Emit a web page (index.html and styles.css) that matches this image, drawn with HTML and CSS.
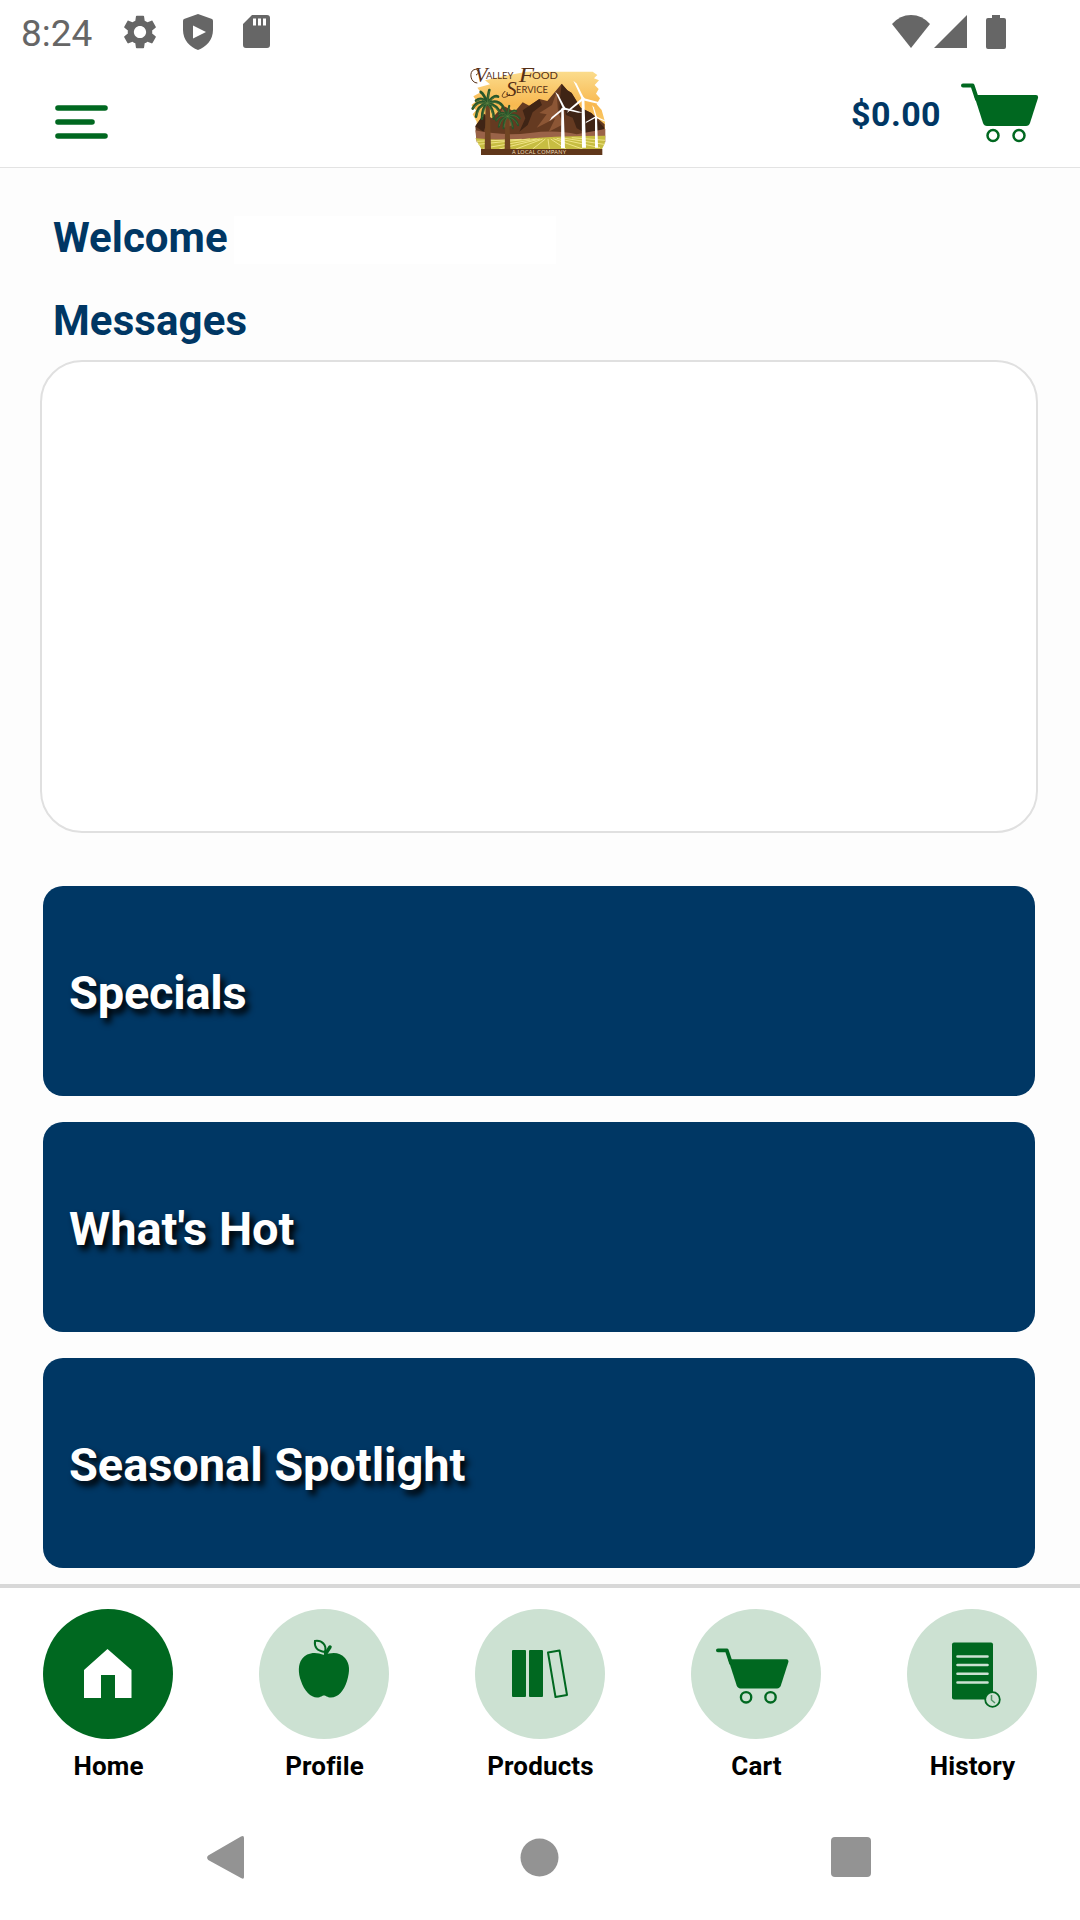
FILE: index.html
```html
<!DOCTYPE html>
<html lang="en">
<head>
<meta charset="utf-8">
<title>Valley Food Service</title>
<link rel="stylesheet" href="styles.css">
</head>
<body>
<div class="screen">
  <div class="status">
    <span class="clock">8:24</span>
    <svg class="gear" width="34" height="34" viewBox="2 2 20 20"><path d="M19.14 12.94c.04-.3.06-.61.06-.94 0-.32-.02-.64-.07-.94l2.03-1.58c.18-.14.23-.41.12-.61l-1.92-3.32c-.12-.22-.37-.29-.59-.22l-2.39.96c-.5-.38-1.03-.7-1.62-.94l-.36-2.54c-.04-.24-.24-.41-.48-.41h-3.84c-.24 0-.43.17-.47.41l-.36 2.54c-.59.24-1.13.57-1.62.94l-2.39-.96c-.22-.08-.47 0-.59.22L2.74 8.87c-.12.21-.08.47.12.61l2.03 1.58c-.05.3-.09.63-.09.94s.02.64.07.94l-2.03 1.58c-.18.14-.23.41-.12.61l1.92 3.32c.12.22.37.29.59.22l2.39-.96c.5.38 1.03.7 1.62.94l.36 2.54c.05.24.24.41.48.41h3.84c.24 0 .44-.17.47-.41l.36-2.54c.59-.24 1.13-.56 1.62-.94l2.39.96c.22.08.47 0 .59-.22l1.92-3.32c.12-.22.07-.47-.12-.61l-2.01-1.58zM12 15.6c-1.98 0-3.6-1.62-3.6-3.6s1.62-3.6 3.6-3.6 3.6 1.62 3.6 3.6-1.62 3.6-3.6 3.6z"/></svg>
    <svg class="shield" width="30" height="36" viewBox="0 0 30 36"><path fill-rule="evenodd" d="M15 0 29 5Q30 5.500 30 7V16C30 26 23 33 15 36 7 33 0 26 0 16V7Q0 5.500 1 5ZM10 11.500V24.500L23 18Z"/></svg>
    <svg class="sdcard" width="27" height="33" viewBox="0 0 27 33"><path fill-rule="evenodd" d="M9 0H24Q27 0 27 3V30Q27 33 24 33H3Q0 33 0 30V9ZM10 3.500V10.500H13V3.500ZM15 3.500V10.500H18V3.500ZM20 3.500V10.500H23V3.500Z"/></svg>
    <div class="signals">
      <svg width="38" height="33" viewBox="0 0 38 33"><path d="M0 9Q8 0 19 0T38 9L19 33Z"/></svg>
      <svg class="cell" width="33" height="33" viewBox="0 0 33 33"><path d="M33 0V33H0Z"/></svg>
      <svg class="battery" width="20" height="34" viewBox="0 0 20 34"><path d="M6 0H14V3H18Q20 3 20 5V32Q20 34 18 34H2Q0 34 0 32V5Q0 3 2 3H6Z"/></svg>
    </div>
  </div>

  <header class="header">
    <svg class="menu" width="53" height="34" viewBox="0 0 53 34"><path d="M3 3H50M3 17H37M3 31H50"/></svg>
    <svg class="logo" width="136" height="92" viewBox="30 24 408 276">
      <defs>
        <linearGradient id="sky" x1="0" y1="0" x2="0" y2="1"><stop offset="0" stop-color="#fbdc8c"/><stop offset=".5" stop-color="#f8b850"/><stop offset="1" stop-color="#fbd878"/></linearGradient>
        <g id="frond" fill="none" stroke-linecap="round">
          <path stroke="#28552a" stroke-width="8" d="M0 0Q-16-22-34-8M0 0Q-30-12-44 16M0 0Q-30 5-34 40M0 0Q-16 14-16 46M0 0Q-10-28-20-34M0 0Q2-26 6-40M0 0Q20-28 32-20M0 0Q30-14 46 8M0 0Q32 4 40 34M0 0Q18 14 20 46"/>
          <path stroke="#5c8040" stroke-width="2" d="M0 0Q-16-20-34-6M0 0Q-28-8-42 14M0 0Q-26 8-32 36M0 0Q-12 18-14 40M0 0Q2-24 6-36M0 0Q20-24 30-18M0 0Q28-10 42 8M0 0Q28 8 38 30M0 0Q16 18 18 40"/>
        </g>
        <g id="rotor"><path d="M-3 0-2-62 3-50 4 0Z"/><path transform="rotate(130)" d="M-3 0-2-64 3-50 4 0Z"/><path transform="rotate(257)" d="M-3 0-2-64 3-50 4 0Z"/><circle r="5"/></g>
      </defs>
      <path fill="url(#sky)" d="M200 50H398L412 60 402 70 417 76 404 90 416 102 408 116 420 130 410 148 425 165 435 200V250H50V200L38 178 48 166 34 150 50 138 40 124 62 112 52 98 90 88 75 76 118 66Z"/>
      <path fill="#653a21" d="M46 214 72 176 96 190 130 152 164 170 188 142 208 152 238 132 262 138 305 86 322 106 335 114 362 158 394 174 434 208V256H50Z"/>
      <path fill="#3f2415" d="M305 86 322 106 335 114 362 158 394 174 434 220 395 244 350 220 338 188 318 180 312 154 298 174 300 130ZM238 132 246 150 218 172 203 210 178 230 196 190 188 166 208 152ZM72 176 82 200 70 230 46 214Z"/>
      <path fill="#8c5635" d="M290 110 276 150 238 174 260 178 230 218 286 190 266 230 310 208 294 170ZM130 152 120 180 134 190 128 220 160 210Z"/>
      <path fill="#9a6348" d="M46 226Q130 244 210 234T350 238L436 222V262H50Z"/>
      <path fill="#c7bd42" d="M46 250Q130 258 215 250T436 242L434 266 426 282H64Z"/>
      <path fill="none" stroke="#f0e486" stroke-width="3" d="M230 252 70 280M240 252 118 282M248 252 168 282M256 252 218 282M264 252 268 282M272 252 318 282M280 251 368 282M290 250 420 278M308 249 432 268M335 248 436 256M210 252 54 268M185 253 50 259"/>
      <path fill="#704523" d="M77 140H89L93 282H74ZM136 188H148L151 282H134Z"/>
      <use href="#frond" transform="translate(82 145)"/><use href="#frond" transform="translate(143 184) scale(.78)"/>
      <g fill="#fff"><path d="M304 160H311L315 280H303ZM365 128H373L378 278H366ZM405 186H411L414 278H405Z"/><use href="#rotor" transform="translate(312 160) rotate(-26) scale(.9)"/><use href="#rotor" transform="translate(369 132) rotate(-26)"/><use href="#rotor" transform="translate(408 186) rotate(-16) scale(.6)"/></g>
      <path fill="#60371a" d="M63 282H427V300H63Z"/>
      <g fill="none" stroke="#573016" stroke-width="3"><path d="M52 84C31 84 26 50 42 44 56 40 60 56 48 60M136 108C116 128 132 134 150 118"/></g>
      <g class="logo-name"><text class="initial" x="44" y="82" textLength="38" lengthAdjust="spacingAndGlyphs">V</text><text x="78" y="73" textLength="82" lengthAdjust="spacingAndGlyphs">ALLEY</text><text class="initial" x="176" y="80" textLength="46" lengthAdjust="spacingAndGlyphs">F</text><text x="216" y="73" textLength="78" lengthAdjust="spacingAndGlyphs">OOD</text><text class="initial" x="138" y="123" textLength="32" lengthAdjust="spacingAndGlyphs">S</text><text x="168" y="114" textLength="96" lengthAdjust="spacingAndGlyphs">ERVICE</text></g>
      <text class="tagline" x="156" y="297" textLength="162">A LOCAL COMPANY</text>
    </svg>
    <div class="total"><span class="amount">$0.00</span>
      <svg width="77" height="60" viewBox="0 0 77 60"><use href="#cart"/></svg>
    </div>
  </header>

  <main class="content">
    <div class="welcome"><h1>Welcome</h1><div class="customer"></div></div>
    <h2>Messages</h2>
    <section class="messages"></section>
    <div class="tiles">
      <div class="tile"><span class="specials">Specials</span></div>
      <div class="tile"><span>What's Hot</span></div>
      <div class="tile"><span class="seasonal">Seasonal Spotlight</span></div>
    </div>
  </main>

  <nav class="tabs">
    <div class="tab active"><div class="disc"><svg width="130" height="130" viewBox="0 0 130 130"><path fill="#fff" d="M64.500 40 88.500 61V89H72V66H58V89H41V61Z"/></svg></div><span>Home</span></div>
    <div class="tab"><div class="disc"><svg width="130" height="130" viewBox="0 0 130 130"><path fill="#006820" d="M65 46C56 42 47 44 43 50 39 55 39 64 42 72 45 82 52 88.500 58 88.500 62 88.500 63 86.500 65 86.500S68 88.500 72 88.500C79 88.500 85 82 88 72 91 62 91 55 86 49 81 43 73 43 65 46Z"/><path fill="none" stroke="#006820" stroke-width="2" d="M66 43C58 42 55 38 56 32 63 31 68 36 66 43Z"/><path stroke="#006820" stroke-width="3.500" stroke-linecap="round" d="M66.500 45 71 38"/></svg></div><span>Profile</span></div>
    <div class="tab"><div class="disc"><svg width="130" height="130" viewBox="0 0 130 130"><g fill="#006820"><rect x="37" y="41" width="14" height="47" rx="1"/><rect x="54" y="41" width="14" height="47" rx="1"/></g><path fill="none" stroke="#006820" stroke-width="2" stroke-linejoin="round" d="M73 43.500 84.500 41.500 92 86 80.500 88Z"/></svg></div><span>Products</span></div>
    <div class="tab"><div class="disc"><svg width="130" height="130" viewBox="0 0 130 130"><g transform="translate(25 39) scale(.94)"><g id="cart"><path fill="none" stroke="#006820" stroke-width="4" stroke-linecap="round" stroke-linejoin="round" d="M2 2.500H11.500L16 16"/><path fill="#006820" d="M13 12H75Q77.500 12 77 15L69 40Q68 43 65 43H26Q23 43 22 40Z"/><g fill="none" stroke="#006820" stroke-width="2.500"><circle cx="32" cy="52.500" r="5.500"/><circle cx="58" cy="52.500" r="5.500"/></g></g></g></svg></div><span>Cart</span></div>
    <div class="tab"><div class="disc"><svg width="130" height="130" viewBox="0 0 130 130"><rect x="45" y="33.500" width="41" height="57" rx="2" fill="#006820"/><path fill="none" stroke="#cce1d2" stroke-width="2.600" stroke-linecap="round" d="M50.500 47.500H80.500M50.500 56H80.500M50.500 64.700H80.500M50.500 73.500H80.500"/><circle cx="85.500" cy="90.500" r="7.300" fill="#cce1d2" stroke="#006820" stroke-width="1.800"/><path fill="none" stroke="#4f9364" stroke-width="1.500" d="M84.500 86V91L88 94"/></svg></div><span>History</span></div>
  </nav>

  <div class="system">
    <svg width="38" height="43" viewBox="0 0 38 43"><path d="M34 .6Q37-1 37 2V41Q37 44 34 42L1.200 24Q-1 21.500 1.200 19.500Z"/></svg>
    <svg class="home-key" width="39" height="39" viewBox="0 0 39 39"><circle cx="19.500" cy="19.500" r="19"/></svg>
    <svg width="40" height="40" viewBox="0 0 40 40"><rect width="40" height="40" rx="4"/></svg>
  </div>
</div>
</body>
</html>
```
FILE: styles.css
```css
* { box-sizing: border-box; }
body { margin: 0; font-family: Roboto, sans-serif; background: #fff; }
svg { display: block; flex: none; overflow: visible; }
.screen { width: 1080px; height: 1920px; display: flex; flex-direction: column; overflow: hidden; }

.status { height: 63px; flex: none; display: flex; align-items: center; padding: 0 74px 0 21px; color: #666; fill: #666; }
.clock { width: 102px; font-size: 37px; line-height: 40px; margin-top: 4px; }
.gear { margin-right: 26px; }
.shield { margin-right: 30px; }
.signals { display: flex; align-items: center; margin-left: auto; }
.cell { margin: 0 19px 0 4px; }

.header { height: 105px; flex: none; display: grid; grid-template-columns: 1fr auto 1fr; padding: 0 42px 0 38px; border-bottom: 1px solid #e3e3e3; }
.menu { margin: 42px 0 0 17px; fill: none; stroke: #006820; stroke-width: 5.6px; stroke-linecap: round; }
.logo-name { font: 30px Lato, sans-serif; fill: #573016; }
.initial { font: italic 64px "Liberation Serif", serif; }
.tagline { font: 16px Lato, sans-serif; fill: #f2dfbd; }
.total { display: flex; justify-content: flex-end; gap: 20px; padding-top: 20px; }
.amount { font-size: 34px; line-height: 40px; margin-top: 11px; font-weight: 700; letter-spacing: 0.4px; color: #003764; }

.content { height: 1416px; flex: none; padding: 48px 42px 0 41px; background: #fdfdfd; }
.welcome { display: flex; gap: 6px; height: 83px; }
h1, h2 { margin: 0 0 0 12px; font-size: 42px; line-height: 44px; font-weight: 700; color: #003764; }
h1 { height: 48px; }
h2 { height: 61px; letter-spacing: 0.1px; }
.customer { width: 322px; height: 48px; background: #fff; }
.messages { height: 473px; width: 998px; margin-left: -1px; border: 2px solid #e0e0e0; border-radius: 42px; background: #fff; }
.tiles { display: flex; flex-direction: column; gap: 26px; padding: 53px 3px 0 2px; }
.tile { height: 210px; display: flex; align-items: center; padding: 2px 26px 0; border-radius: 20px; background: #003764; color: #fff; font-size: 47px; font-weight: 700; text-shadow: 4px 5px 6px #000; }
.specials { letter-spacing: -0.25px; }
.seasonal { letter-spacing: -0.07px; }

.tabs { height: 209px; flex: none; display: flex; justify-content: space-between; padding: 21px 43px 0; border-top: 4px solid #d8d8d8; background: #fff; }
.tab { width: 130px; display: flex; flex-direction: column; align-items: center; font-size: 26px; line-height: 32px; font-weight: 700; letter-spacing: 0.15px; color: #000; }
.tab span { margin: 11px 0 0 1px; }
.disc { width: 130px; height: 130px; border-radius: 50%; background: #cce1d2; }
.active .disc { background: #006820; }

.system { flex: 1; display: flex; justify-content: space-between; align-items: center; padding: 1px 209px 0 207px; fill: #939393; }
.home-key { margin-left: 2px; }
```
